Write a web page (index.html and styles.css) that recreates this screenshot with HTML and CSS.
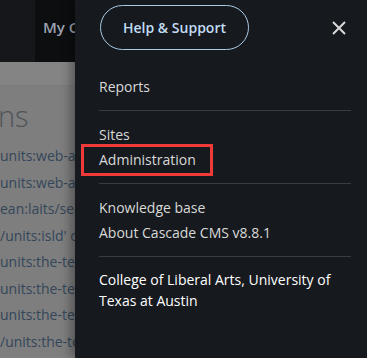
FILE: index.html
```html
<!DOCTYPE html>
<html>
	<head>
		<meta charset="utf-8">
		<title>Cascade CMS - Menu</title>
		<meta name="viewport" content="width=device-width, initial-scale=1">
		<link rel="stylesheet" href="styles.css">
	</head>
	<body>
		<div class="page">
			<header class="topbar">
				<div class="brand"></div>
				<div class="nav-item">My Content</div>
			</header>
			<main class="content">
				<div class="band"></div>
				<h2 class="title">ns</h2>
				<ul class="rows">
					<li>units:web-admin' content</li>
					<li>units:web-admin' content</li>
					<li>ean:laits/search</li>
					<li>/units:isld' content</li>
					<li>units:the-texas</li>
					<li>units:the-texas</li>
					<li>units:the-texas</li>
					<li>/units:the-texas</li>
				</ul>
			</main>
		</div>

		<!-- slide-out drawer -->
		<aside class="drawer">
			<div class="drawer-head">
				<button class="help">Help &amp; Support</button>
				<button class="close" aria-label="Close">
					<svg width="14" height="14" viewBox="0 0 14 14">
						<path d="M1 1 L13 13 M13 1 L1 13" stroke="#d9d9d9" stroke-width="2" fill="none"/>
					</svg>
				</button>
			</div>
			<ul class="menu">
				<li>Reports</li>
			</ul>
			<ul class="menu">
				<li>Sites</li>
				<li><span class="marked">Administration</span></li>
			</ul>
			<ul class="menu">
				<li>Knowledge base</li>
				<li>About Cascade CMS v8.8.1</li>
			</ul>
			<p class="org">College of Liberal Arts, University of Texas at Austin</p>
		</aside>
	</body>
</html>
```

FILE: styles.css
```css
body {
	margin: 0;
	width: 367px;
	height: 358px;
	overflow: hidden;
	position: relative;
	font-family: "Open Sans", "DejaVu Sans", sans-serif;
	background-color: #7f7f7f;
}

/* page behind */
.page {
	width: 100%;
	height: 100%;
}
.topbar {
	display: flex;
	height: 62px;
}
.brand {
	width: 35px;
	background-color: #16171b;
}
.nav-item {
	flex: 1;
	background-color: #0d0e10;
	color: #9aa3b1;
	font-size: 15px;
	font-weight: 600;
	padding: 17px 0 0 8px;
	white-space: nowrap;
	overflow: hidden;
}
.content {
	background-color: #7e7e7e;
}
.band {
	height: 23px;
	background-color: #848484;
	border-bottom: 1px solid #7a7a7a;
}
.title {
	margin: 0;
	padding-top: 11px;
	font-size: 29px;
	font-weight: 300;
	line-height: 38px;
	color: #50545a;
	text-indent: -2px;
}
.rows {
	list-style: none;
	margin: 8px 0 0;
	padding: 0;
}
.rows li {
	font-size: 14px;
	line-height: 26.5px;
	color: #34465a;
	white-space: nowrap;
}

/* drawer */
.drawer {
	position: absolute;
	top: 0;
	left: 75px;
	right: 0;
	bottom: 0;
	background-color: #16191e;
	box-shadow: -4px 0 10px rgba(0, 0, 0, 0.35);
	padding: 0 16px 0 24px;
}
.drawer-head {
	display: flex;
	justify-content: space-between;
	align-items: center;
	padding: 5px 0 13px 1px;
}
.help {
	height: 45px;
	width: 149px;
	border: 1px solid #a9c9e4;
	border-radius: 23px;
	background: transparent;
	color: #c0ddf5;
	font-family: "Open Sans", sans-serif;
	font-size: 14px;
	font-weight: 600;
	padding: 0;
}
.close {
	background: transparent;
	border: none;
	padding: 0;
	margin-right: 5px;
	width: 14px;
	height: 14px;
	display: flex;
}
.menu {
	list-style: none;
	margin: 0;
	padding: 11px 0;
	border-bottom: 1px solid #393c42;
}
.menu li {
	font-size: 14px;
	line-height: 25px;
	color: #d9d9d9;
}
.marked {
	position: relative;
}
.marked::after {
	content: "";
	position: absolute;
	top: -6px;
	bottom: -7px;
	left: -18px;
	right: -17px;
	border: 3px solid #f03a3a;
}
.org {
	margin: 0;
	padding-top: 12px;
	font-size: 14px;
	line-height: 21px;
	color: #ffffff;
}
```
